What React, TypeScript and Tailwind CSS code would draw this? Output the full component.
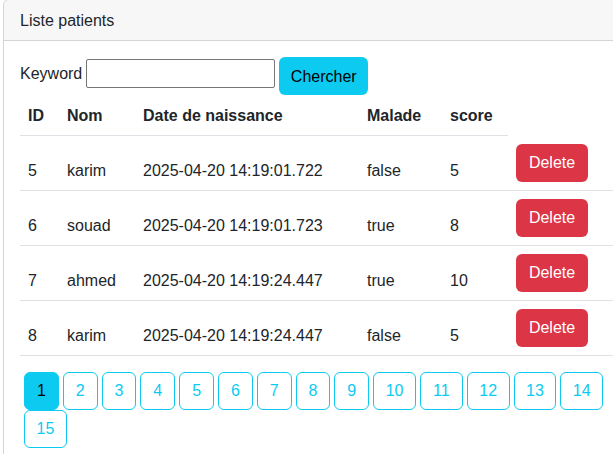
import React from "react";

interface Patient {
  id: number;
  nom: string;
  dateNaissance: string;
  malade: boolean;
  score: number;
}

const patients: Patient[] = [
  { id: 5, nom: "karim", dateNaissance: "2025-04-20 14:19:01.722", malade: false, score: 5 },
  { id: 6, nom: "souad", dateNaissance: "2025-04-20 14:19:01.723", malade: true, score: 8 },
  { id: 7, nom: "ahmed", dateNaissance: "2025-04-20 14:19:24.447", malade: true, score: 10 },
  { id: 8, nom: "karim", dateNaissance: "2025-04-20 14:19:24.447", malade: false, score: 5 },
];

const pages = Array.from({ length: 15 }, (_, i) => i + 1);
const currentPage = 1;

export default function App() {
  return (
    <div className="w-[613px] h-[454px] overflow-hidden bg-white text-base leading-6 text-[#212529] font-[family-name:'Liberation_Sans',Arial,sans-serif]">
      <div className="ml-[3px] -mt-px w-[640px] rounded-md border border-[#d5d5d5]">
        {/* Card header */}
        <div className="rounded-t-md border-b border-[#d5d5d5] bg-[#f7f7f7] px-4 pt-[9px] pb-[7px]">
          Liste patients
        </div>

        {/* Card body */}
        <div className="p-4">
          <form className="flex items-start" onSubmit={(e) => e.preventDefault()}>
            <label className="mt-[5px]">Keyword</label>
            <input
              type="text"
              className="ml-1 mt-[2px] h-[29px] w-[189px] rounded-[2px] border border-[#767676] bg-white px-0.5 outline-none"
            />
            <button className="ml-1 h-[38px] w-[89px] rounded-md bg-[#0dcaf0] pt-px text-black">
              Chercher
            </button>
          </form>

          <table className="mb-4 w-full table-fixed border-collapse">
            <colgroup>
              <col className="w-[39px]" />
              <col className="w-[76px]" />
              <col className="w-[224px]" />
              <col className="w-[83px]" />
              <col className="w-[66px]" />
              <col />
            </colgroup>
            <thead>
              <tr>
                <th className="border-b border-[#dee2e6] px-2 pt-[9px] pb-[7px] text-left font-bold">ID</th>
                <th className="border-b border-[#dee2e6] px-2 pt-[9px] pb-[7px] text-left font-bold">Nom</th>
                <th className="border-b border-[#dee2e6] px-2 pt-[9px] pb-[7px] text-left font-bold">Date de naissance</th>
                <th className="border-b border-[#dee2e6] px-2 pt-[9px] pb-[7px] text-left font-bold">Malade</th>
                <th className="border-b border-[#dee2e6] px-2 pt-[9px] pb-[7px] text-left font-bold">score</th>
              </tr>
            </thead>
            <tbody>
              {patients.map((p) => (
                <tr key={p.id}>
                  <td className="border-b border-[#dee2e6] px-2 pt-2 pb-[7px] align-bottom">{p.id}</td>
                  <td className="border-b border-[#dee2e6] px-2 pt-2 pb-[7px] align-bottom">{p.nom}</td>
                  <td className="border-b border-[#dee2e6] px-2 pt-2 pb-[7px] align-bottom whitespace-nowrap">{p.dateNaissance}</td>
                  <td className="border-b border-[#dee2e6] px-2 pt-2 pb-[7px] align-bottom">{String(p.malade)}</td>
                  <td className="border-b border-[#dee2e6] px-2 pt-2 pb-[7px] align-bottom">{p.score}</td>
                  <td className="border-b border-[#dee2e6] p-2 align-top">
                    <button className="block h-[38px] w-[72px] rounded-md bg-[#dc3545] pt-px text-white">
                      Delete
                    </button>
                  </td>
                </tr>
              ))}
            </tbody>
          </table>

          {/* Pagination */}
          <ul className="flex flex-wrap">
            {pages.map((n) => (
              <li key={n}>
                <a
                  href="#"
                  className={
                    (n < 10 ? "w-[34.8px] " : "w-[42.8px] ") +
                    (n === currentPage
                      ? "ml-1 flex h-[38px] items-center justify-center rounded-md border border-[#0dcaf0] bg-[#0dcaf0] pt-px text-black"
                      : "ml-1 flex h-[38px] items-center justify-center rounded-md border border-[#0dcaf0] pt-px text-[#0dcaf0]")
                  }
                >
                  {n}
                </a>
              </li>
            ))}
          </ul>
        </div>
      </div>
    </div>
  );
}
